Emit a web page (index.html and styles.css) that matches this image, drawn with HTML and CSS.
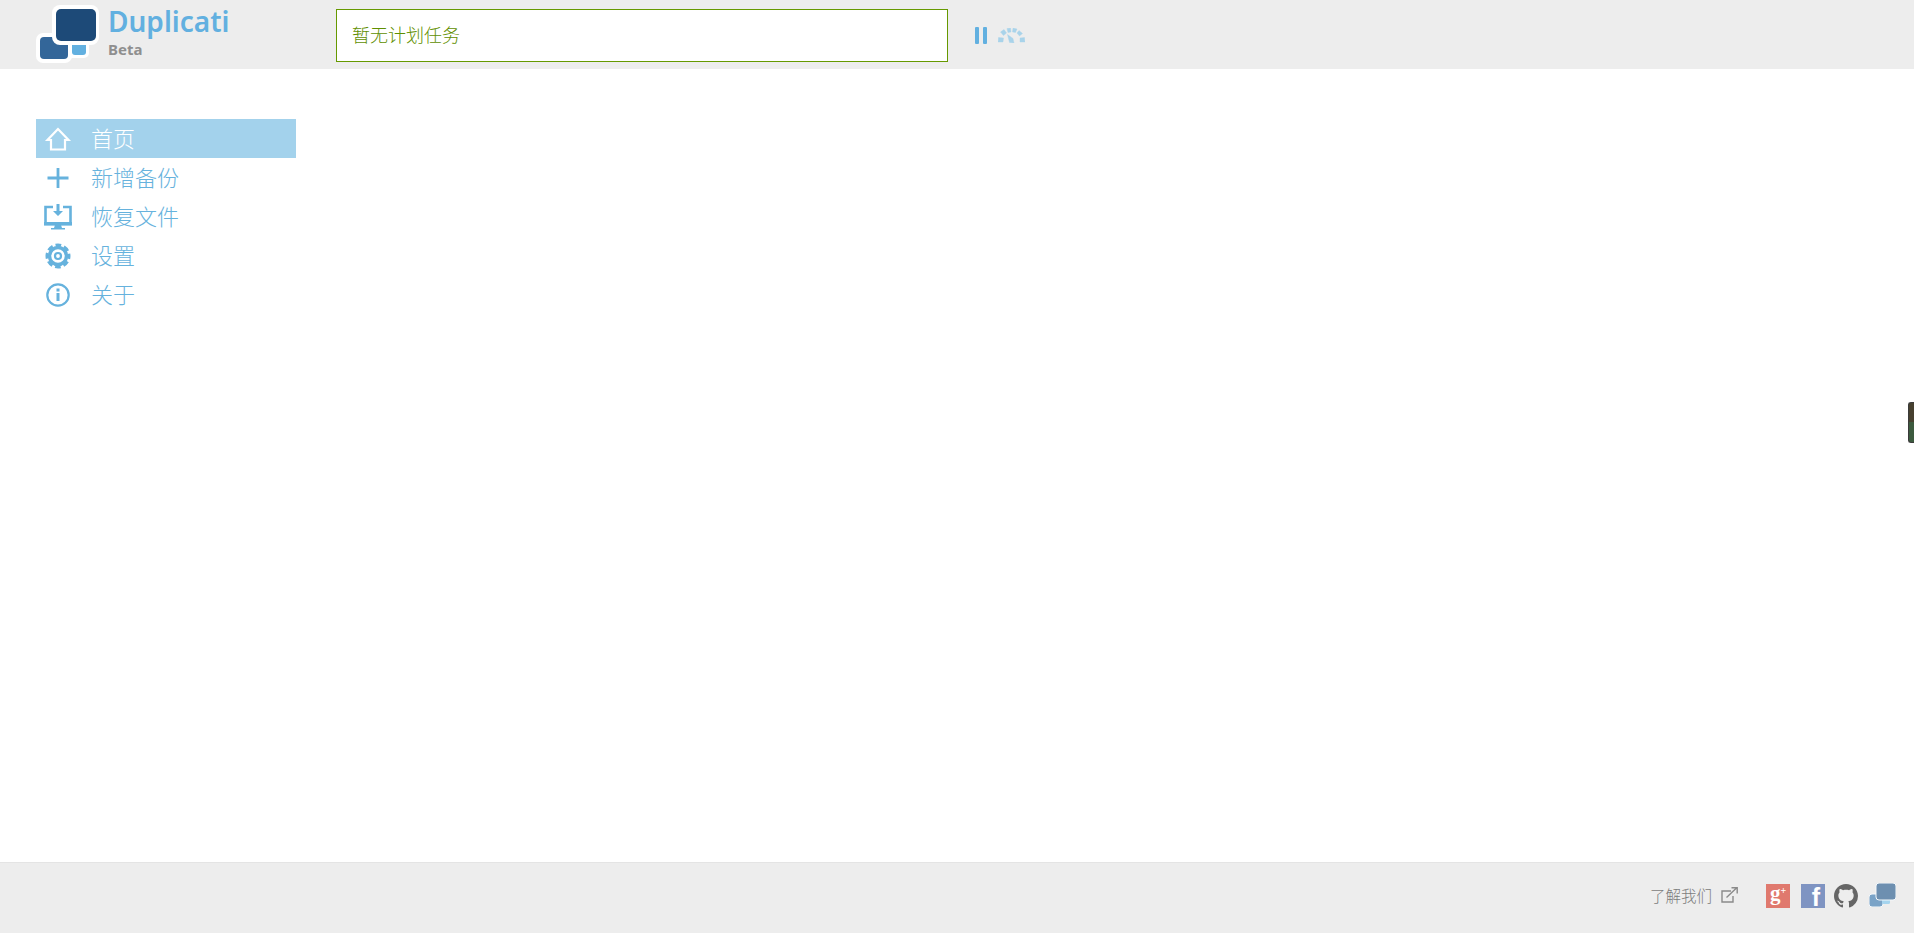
FILE: index.html
```html
<!DOCTYPE html>
<html lang="zh">
<head>
<meta charset="utf-8">
<title>Duplicati</title>
<link rel="stylesheet" href="styles.css">
</head>
<body>
<header class="header">
  <a class="logo">
    <svg class="logo-mark" width="64" height="60" viewBox="0 0 64 60">
      <rect x="30" y="28" width="23" height="25" rx="5" fill="#fff"/>
      <rect x="36" y="33" width="14" height="17" rx="3" fill="#62b0e0"/>
      <rect x="0" y="28" width="36" height="30" rx="7" fill="#fff"/>
      <rect x="4" y="32" width="28" height="22" rx="4" fill="#336699"/>
      <rect x="16" y="0" width="47" height="40" rx="8" fill="#fff"/>
      <rect x="20" y="4" width="40" height="32" rx="5" fill="#1d4a78"/>
    </svg>
    <div class="brand">
      <div class="brand-name">Duplicati</div>
      <div class="brand-tag">Beta</div>
    </div>
  </a>
  <div class="status">暂无计划任务</div>
  <div class="controls">
    <div class="pause"><span></span><span></span></div>
    <svg class="gauge" width="27" height="15" viewBox="0 0 27 15">
      <g fill="#a9d3ea" stroke="#a9d3ea" stroke-width="0.400" stroke-linejoin="round">
        <path d="M.5 9.500l5 .5-.5 4H0z"/>
        <path d="M2.500 4 6 1.500l2.500 3.500-3 2.500z"/>
        <path d="M9 .5 12.500 0l.5 4-3 .5z"/>
        <path d="M15 0l4 1-1.500 3.500-3-.5z"/>
        <path d="M21 2.500l3.500 3-3 2.500-2.500-3z"/>
        <path d="M22 10l4.500-.5.500 4.500h-5z"/>
        <path d="M9.500 6.500l5.500 4 1 4.500-4.500-.5z"/>
      </g>
    </svg>
  </div>
</header>

<main class="main">
  <nav class="menu">
    <a class="item active">
      <svg class="icon" viewBox="0 0 26 26"><path d="M13 3 2.500 14H6v9.500h14V14h3.500z" fill="none" stroke="#fff" stroke-width="2.200"/></svg>
      <span>首页</span>
    </a>
    <a class="item">
      <svg class="icon" viewBox="0 0 26 26"><path d="M13 3v20M2.500 13h21" stroke="#66b2dd" stroke-width="2.800" fill="none"/></svg>
      <span>新增备份</span>
    </a>
    <a class="item">
      <svg class="icon" viewBox="0 0 28 26"><path d="M9 3H1.500v17h25V3H19" fill="none" stroke="#66b2dd" stroke-width="2.600"/><path d="M0 18h28v3.500H0zM11 21h6l1 3h3v1.500H7V24h3z" fill="#66b2dd"/><path d="M12.500 0h3v7h3.500L14 12 9 7h3.500z" fill="#66b2dd"/></svg>
      <span>恢复文件</span>
    </a>
    <a class="item">
      <svg class="icon" viewBox="0 0 26 26">
        <circle cx="13" cy="13" r="11" fill="none" stroke="#66b2dd" stroke-width="3" stroke-dasharray="5.640 3" stroke-dashoffset="2.820"/>
        <circle cx="13" cy="13" r="8.500" fill="none" stroke="#66b2dd" stroke-width="3.500"/>
        <circle cx="13" cy="13" r="3" fill="none" stroke="#66b2dd" stroke-width="2.200"/>
      </svg>
      <span>设置</span>
    </a>
    <a class="item">
      <svg class="icon" viewBox="0 0 26 26"><circle cx="13" cy="13" r="10.700" fill="none" stroke="#66b2dd" stroke-width="2.200"/><rect x="11.500" y="11" width="3" height="8" fill="#66b2dd"/><rect x="11.500" y="6.500" width="3" height="3" fill="#66b2dd"/></svg>
      <span>关于</span>
    </a>
  </nav>
  <div class="handle"></div>
</main>

<footer class="footer">
  <a class="about">了解我们</a>
  <svg class="ext" width="17" height="16" viewBox="0 0 17 16"><path d="M10 4H1v11h11V9" fill="none" stroke="#8a8a8a" stroke-width="1.400"/><path d="M5.500 10.500 15.500 1M10.500 .8h5.700v5.700" fill="none" stroke="#8a8a8a" stroke-width="1.400"/></svg>
  <div class="social">
    <div class="tile gplus">g<sup>+</sup></div>
    <div class="tile fb">f</div>
    <svg class="gh" width="24" height="24" viewBox="0 0 16 16"><path fill="#666" d="M8 0C3.580 0 0 3.580 0 8c0 3.540 2.290 6.530 5.470 7.590.4.070.55-.17.55-.38 0-.19-.01-.82-.01-1.490-2.010.37-2.530-.49-2.690-.94-.09-.23-.48-.94-.82-1.130-.28-.15-.68-.52-.01-.53.63-.01 1.080.58 1.230.82.720 1.210 1.870.87 2.330.66.070-.52.280-.87.510-1.070-1.780-.2-3.640-.89-3.640-3.950 0-.87.310-1.590.820-2.150-.08-.2-.36-1.020.08-2.120 0 0 .67-.21 2.200.82.640-.18 1.320-.27 2-.27s1.360.09 2 .27c1.530-1.040 2.200-.82 2.200-.82.440 1.100.160 1.920.080 2.120.510.560.820 1.270.820 2.150 0 3.070-1.870 3.750-3.650 3.950.29.250.54.730.54 1.480 0 1.070-.01 1.930-.01 2.200 0 .21.150.46.550.38A8.010 8.010 0 0 0 16 8c0-4.420-3.580-8-8-8z"/></svg>
    <svg class="mini" width="27" height="24" viewBox="0 0 27 24">
      <rect x="0" y="11" width="14" height="13" rx="3" fill="#7aa3c7" stroke="#f4f8fb" stroke-width="1"/>
      <rect x="13" y="14" width="8" height="7" rx="1.500" fill="#a5d4ee"/>
      <rect x="7" y="0" width="20" height="17" rx="3" fill="#6d8fb0" stroke="#f4f8fb" stroke-width="1"/>
    </svg>
  </div>
</footer>
</body>
</html>
```

FILE: styles.css
```css
* { box-sizing: border-box; }
html, body { height: 100%; margin: 0; }
body {
  display: flex;
  flex-direction: column;
  height: 933px;
  overflow: hidden;
  background: #fff;
  font-family: "Noto Sans", "Noto Sans CJK SC", sans-serif;
}
.header {
  height: 69px;
  flex: none;
  display: flex;
  align-items: flex-start;
  background: #ededed;
  padding-left: 36px;
}
.logo { display: flex; width: 300px; padding-top: 5px; }
.logo-mark { flex: none; display: block; margin-right: 8px; overflow: visible; }
.brand-name {
  font-size: 28px;
  line-height: 32px;
  font-weight: 600;
  color: #62b0e0;
}
.brand-tag {
  font-size: 15px;
  line-height: 18px;
  margin-top: 3px;
  font-weight: 700;
  color: #8f8f8f;
}
.status {
  width: 612px;
  height: 53px;
  margin-top: 9px;
  padding-left: 15px;
  line-height: 49px;
  border: 1px solid #669900;
  background: #fff;
  font-family: "Noto Sans CJK SC", sans-serif;
  font-weight: 300;
  font-size: 18px;
  color: #5f8f00;
}
.controls { display: flex; align-items: center; height: 71px; margin-left: 27px; }
.pause { display: flex; gap: 4px; margin-right: 11px; }
.pause span { width: 4px; height: 17px; background: #62b0e0; border-radius: 1px; }
.gauge { display: block; }
.main { flex: 1; position: relative; padding: 50px 0 0 36px; }
.menu { width: 260px; }
.item {
  display: flex;
  align-items: center;
  height: 39px;
  color: #66b2dd;
  font-family: "Noto Sans CJK SC", sans-serif;
  font-weight: 300;
  font-size: 22px;
}
.item span { margin-top: -3px; }
.item.active { background: #a3d2ec; color: #fff; }
.icon { width: 28px; height: 26px; margin: 0 19px 0 8px; flex: none; }
.handle {
  position: absolute;
  right: 0;
  top: 333px;
  width: 6px;
  height: 41px;
  border-radius: 3px 0 0 3px;
  background: linear-gradient(#47402f 50%, #3c5a3e 50%);
  border: 1px solid #3a3a3a;
  border-right: 0;
}
.footer {
  height: 71px;
  flex: none;
  display: flex;
  align-items: flex-start;
  justify-content: flex-end;
  padding: 21px 18px 0 0;
  background: #ededed;
  border-top: 1px solid #e4e4e4;
}
.about {
  font-family: "Noto Sans CJK SC", sans-serif;
  font-weight: 300;
  font-size: 15.5px;
  line-height: 22px;
  color: #7c7c7c;
}
.ext { margin: 3px 0 0 9px; }
.social { display: flex; align-items: center; gap: 11px; margin-left: 28px; }
.tile { width: 24px; height: 24px; color: #fff; text-align: center; }
.gh { margin-left: -2px; }
.gplus {
  background: #e0796e;
  font-family: "Liberation Serif", serif;
  font-weight: 700;
  font-size: 21px;
  line-height: 19px;
}
.gplus sup { font-size: 10px; line-height: 0; vertical-align: 6px; }
.fb {
  background: #7f94c2;
  font-family: "Liberation Sans", sans-serif;
  font-weight: 700;
  font-size: 25px;
  line-height: 26px;
  height: 24px;
  padding-left: 6px;
}
.gh { display: block; }
.mini { display: block; margin-top: -2px; }
```
